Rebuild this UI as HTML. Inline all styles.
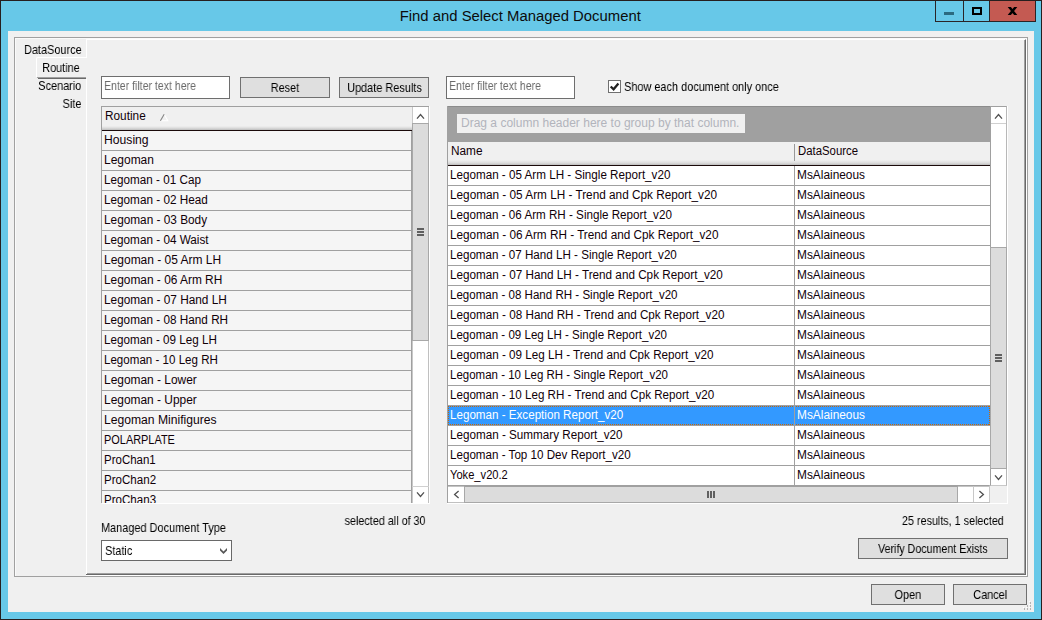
<!DOCTYPE html>
<html>
<head>
<meta charset="utf-8">
<title>Find and Select Managed Document</title>
<style>
html,body{margin:0;padding:0;}
body{width:1042px;height:620px;overflow:hidden;background:#67c8e8;position:relative;
  font-family:"Liberation Sans",sans-serif;font-size:12px;color:#000;}
.abs{position:absolute;box-sizing:border-box;}
#frame{left:0;top:0;width:1042px;height:620px;border:1px solid #261f1f;}
#title{left:0;top:0;width:1041px;height:31px;line-height:31.5px;text-align:center;font-size:15.2px;color:#0c0c0c;}
#title span{display:inline-block;transform:scaleX(.978);transform-origin:50% 50%;white-space:nowrap;}
#client{left:8px;top:31px;width:1026px;height:581px;background:#f0f0f0;}
/* MS Sans Serif look-alike: tall + condensed */
.ms{font-size:13px;line-height:14px;height:14px;white-space:nowrap;display:inline-block;transform:scaleX(.84);will-change:transform;}
.msl{transform-origin:0 50%;}
.msr{transform-origin:100% 50%;}
.msc{transform-origin:50% 50%;}
.lbl{height:14px;}
.btn{background:#dfdfdf;border:1px solid #707070;text-align:center;}
.btn .ms{position:relative;top:3px;}
.inp{background:#fff;border:1px solid #6e6e6e;}
.seg{font-size:12.5px;white-space:nowrap;display:inline-block;transform:scaleX(.945);transform-origin:0 50%;color:#100008;}
#lgrid{left:101px;top:106px;width:328px;height:397px;overflow:hidden;border-left:1px solid #a0a0a0;border-top:1px solid #a0a0a0;background:#f5f5f5;}
.lhdr{left:0;top:0;width:310px;height:24px;border-bottom:1px solid #1a0a0a;background:linear-gradient(#f0f0f0 0,#f0f0f0 19px,#dcdcdc 21px,#bdbdbd 23px);line-height:19px;padding-left:3px;}
.row{left:0;height:20px;border-bottom:1px solid #a0a0a0;line-height:19px;}
.lrow{width:310px;background:#f5f5f5;padding-left:2px;border-right:1px solid #a0a0a0;}
#rgrid{left:446px;top:106px;width:561px;height:397px;overflow:hidden;}
.rrow{left:1px;width:543px;background:#fff;border-left:1px solid #a0a0a0;}
.rrow .c1{position:absolute;left:2px;top:0;}
.rrow .c2{position:absolute;left:349px;top:0;}
.rrow.sel{background:#3399ff;}
.rrow.sel .seg{color:#fff;}
.vline{background:#a0a0a0;width:1px;}
.focus{left:0;top:0;width:542px;height:19px;background:
 repeating-linear-gradient(90deg,#cc6600 0,#cc6600 1px,transparent 1px,transparent 2px) 0 0/100% 1px no-repeat,
 repeating-linear-gradient(90deg,#cc6600 0,#cc6600 1px,transparent 1px,transparent 2px) 0 100%/100% 1px no-repeat,
 repeating-linear-gradient(180deg,#cc6600 0,#cc6600 1px,transparent 1px,transparent 2px) 0 0/1px 100% no-repeat,
 repeating-linear-gradient(180deg,#cc6600 0,#cc6600 1px,transparent 1px,transparent 2px) 100% 0/1px 100% no-repeat;}
</style>
</head>
<body>
<div class="abs" id="title"><span>Find and Select Managed Document</span></div>
<!-- caption buttons -->
<div class="abs" style="left:935px;top:1px;width:101px;height:21px;border:1px solid #2a2426;border-top:none;"></div>
<div class="abs" style="left:963px;top:1px;width:1px;height:20px;background:#2a2426;"></div>
<div class="abs" style="left:989px;top:1px;width:46px;height:20px;background:#c45a52;border-left:1px solid #2a2426;"></div>
<div class="abs" style="left:944px;top:12px;width:10px;height:3px;background:#2b6a80;"></div>
<div class="abs" style="left:972px;top:7px;width:10px;height:8px;border:2px solid #000;border-top-width:2px;"></div>
<svg class="abs" style="left:1007px;top:7px;overflow:hidden" width="11" height="8" viewBox="0 0 11 8"><path d="M1.5 -1 L9.5 9 M9.5 -1 L1.5 9" stroke="#000" stroke-width="2.5" fill="none"/></svg>
<div class="abs" id="client"></div>
<!-- outer bordered panel -->
<div class="abs" style="left:14px;top:37px;width:1014px;height:540px;border:1px solid #a0a0a0;"></div>
<div class="abs" style="left:15px;top:38px;width:1012px;height:538px;border:1px solid #fafafa;border-right:none;border-bottom:none;"></div>
<!-- tab page 3D border -->
<div class="abs" style="left:86px;top:39px;width:941px;height:537px;border-top:1px solid #fff;border-right:1px solid #fff;border-bottom:1px solid #fff;"></div>
<div class="abs" style="left:86px;top:39px;width:940px;height:536px;border-top:1px solid #fff;border-right:1px solid #696969;border-bottom:1px solid #696969;"></div>
<div class="abs" style="left:87px;top:40px;width:938px;height:534px;border-right:1px solid #a0a0a0;border-bottom:1px solid #a0a0a0;"></div>
<div class="abs" style="left:86px;top:39px;width:1px;height:18px;background:#fff;"></div>
<div class="abs" style="left:86px;top:79px;width:1px;height:495px;background:#fff;"></div>
<!-- selected tab -->
<div class="abs" style="left:36px;top:57px;width:51px;height:20px;border-top:1px solid #fff;border-left:1px solid #fff;border-top-left-radius:2px;"></div>
<div class="abs" style="left:37px;top:77px;width:49px;height:1px;background:#a0a0a0;"></div>
<div class="abs" style="left:38px;top:78px;width:48px;height:1px;background:#696969;"></div>
<div class="abs lbl" style="left:-118.5px;top:43px;width:200px;text-align:right;"><span class="ms msr">DataSource</span></div>
<div class="abs lbl" style="left:-120.5px;top:61px;width:200px;text-align:right;"><span class="ms msr">Routine</span></div>
<div class="abs lbl" style="left:-118.5px;top:79px;width:200px;text-align:right;"><span class="ms msr">Scenario</span></div>
<div class="abs lbl" style="left:-118.5px;top:97px;width:200px;text-align:right;"><span class="ms msr">Site</span></div>
<!-- filter row -->
<div class="abs inp" style="left:101px;top:76px;width:129px;height:23px;"><span class="ms msl" style="position:absolute;left:2px;top:2px;color:#6a6a6a;transform:scaleX(.81)">Enter filter text here</span></div>
<div class="abs btn" style="left:240px;top:77px;width:90px;height:21px;"><span class="ms msc">Reset</span></div>
<div class="abs btn" style="left:339px;top:77px;width:90px;height:21px;"><span class="ms msc">Update Results</span></div>
<div class="abs inp" style="left:446px;top:76px;width:129px;height:23px;"><span class="ms msl" style="position:absolute;left:2px;top:2px;color:#6a6a6a;transform:scaleX(.81)">Enter filter text here</span></div>
<div class="abs" style="left:608px;top:80px;width:13px;height:13px;border:1px solid #707070;background:#fff;"></div>
<svg class="abs" style="left:608px;top:80px" width="13" height="13" viewBox="0 0 13 13"><path d="M2.7 6.5 L5.6 9.3 L10.4 3.6" stroke="#222" stroke-width="2.3" fill="none"/></svg>
<div class="abs lbl" style="left:624px;top:80px;"><span class="ms msl">Show each document only once</span></div>
<div class="abs" id="lgrid">
<div class="abs lhdr"><span class="seg">Routine</span><svg class="abs" style="left:57px;top:6px" width="10" height="9"><path d="M5.3 1.5 L8.8 7.7 L1.5 7.7" fill="none" stroke="#fff" stroke-width="1.1"/><path d="M1.4 7.8 L5.2 1.2" stroke="#858585" stroke-width="1.1" fill="none"/></svg></div>
<div class="abs row lrow" style="top:24px"><span class="seg" style="transform:scaleX(0.973)">Housing</span></div>
<div class="abs row lrow" style="top:44px"><span class="seg" style="transform:scaleX(0.958)">Legoman</span></div>
<div class="abs row lrow" style="top:64px"><span class="seg" style="transform:scaleX(0.936)">Legoman - 01 Cap</span></div>
<div class="abs row lrow" style="top:84px"><span class="seg" style="transform:scaleX(0.939)">Legoman - 02 Head</span></div>
<div class="abs row lrow" style="top:104px"><span class="seg">Legoman - 03 Body</span></div>
<div class="abs row lrow" style="top:124px"><span class="seg" style="transform:scaleX(0.939)">Legoman - 04 Waist</span></div>
<div class="abs row lrow" style="top:144px"><span class="seg" style="transform:scaleX(0.958)">Legoman - 05 Arm LH</span></div>
<div class="abs row lrow" style="top:164px"><span class="seg" style="transform:scaleX(0.951)">Legoman - 06 Arm RH</span></div>
<div class="abs row lrow" style="top:184px"><span class="seg">Legoman - 07 Hand LH</span></div>
<div class="abs row lrow" style="top:204px"><span class="seg" style="transform:scaleX(0.940)">Legoman - 08 Hand RH</span></div>
<div class="abs row lrow" style="top:224px"><span class="seg" style="transform:scaleX(0.934)">Legoman - 09 Leg LH</span></div>
<div class="abs row lrow" style="top:244px"><span class="seg" style="transform:scaleX(0.926)">Legoman - 10 Leg RH</span></div>
<div class="abs row lrow" style="top:264px"><span class="seg" style="transform:scaleX(0.954)">Legoman - Lower</span></div>
<div class="abs row lrow" style="top:284px"><span class="seg" style="transform:scaleX(0.954)">Legoman - Upper</span></div>
<div class="abs row lrow" style="top:304px"><span class="seg" style="transform:scaleX(0.971)">Legoman Minifigures</span></div>
<div class="abs row lrow" style="top:324px"><span class="seg" style="transform:scaleX(0.875)">POLARPLATE</span></div>
<div class="abs row lrow" style="top:344px"><span class="seg" style="transform:scaleX(0.919)">ProChan1</span></div>
<div class="abs row lrow" style="top:364px"><span class="seg" style="transform:scaleX(0.925)">ProChan2</span></div>
<div class="abs row lrow" style="top:384px"><span class="seg" style="transform:scaleX(0.925)">ProChan3</span></div>
<!-- left grid vertical scrollbar -->
<div class="abs" style="left:310px;top:0;width:17px;height:396px;background:#fff;border-left:1px solid #c8c8c8;border-right:1px solid #c0c0c0;"></div>
<div class="abs" style="left:310px;top:16px;width:17px;height:218px;background:#dcdcdc;border:1px solid #a8a8a8;"></div>
<div class="abs" style="left:310px;top:379px;width:17px;height:1px;background:#d0d0d0;"></div>
<svg class="abs" style="left:313px;top:6px" width="11" height="7" viewBox="0 0 11 7"><path d="M2 5.6 L5.5 1.6 L9 5.6" stroke="#505050" stroke-width="1.3" fill="none"/></svg>
<svg class="abs" style="left:313px;top:384px" width="11" height="7" viewBox="0 0 11 7"><path d="M2 1.4 L5.5 5.4 L9 1.4" stroke="#505050" stroke-width="1.3" fill="none"/></svg>
<div class="abs" style="left:315px;top:121px;width:7px;height:2px;background:#606060;box-shadow:0 3px 0 #606060,0 6px 0 #606060;"></div>
</div>
<div class="abs" id="rgrid">
<div class="abs" style="left:1px;top:0;width:543px;height:36px;background:#a0a0a0;border-top:1px solid #8c8c8c;"></div>
<div class="abs" style="left:11px;top:8px;width:288px;height:19px;background:#f0f0f0;line-height:18px;padding-left:4px;"><span class="seg" style="color:#b2b4bc;transform:scaleX(.961)">Drag a column header here to group by that column.</span></div>
<div class="abs" style="left:1px;top:36px;width:543px;height:24px;border-bottom:1px solid #1a0a0a;background:linear-gradient(#f0f0f0 0,#f0f0f0 18px,#dcdcdc 21px,#bdbdbd 23px);line-height:19px;"><span class="seg" style="position:absolute;left:4px;top:0">Name</span><span class="seg" style="position:absolute;left:351px;top:0;transform:scaleX(.91)">DataSource</span></div>
<div class="abs" style="left:348px;top:38px;width:1px;height:17px;background:#989898;"></div>
<div class="abs row rrow" style="top:60px"><span class="seg c1" style="transform:scaleX(0.933)">Legoman - 05 Arm LH - Single Report_v20</span><span class="seg c2" style="transform:scaleX(.95)">MsAlaineous</span></div>
<div class="abs row rrow" style="top:80px"><span class="seg c1" style="transform:scaleX(0.942)">Legoman - 05 Arm LH - Trend and Cpk Report_v20</span><span class="seg c2" style="transform:scaleX(.95)">MsAlaineous</span></div>
<div class="abs row rrow" style="top:100px"><span class="seg c1" style="transform:scaleX(0.931)">Legoman - 06 Arm RH - Single Report_v20</span><span class="seg c2" style="transform:scaleX(.95)">MsAlaineous</span></div>
<div class="abs row rrow" style="top:120px"><span class="seg c1" style="transform:scaleX(0.940)">Legoman - 06 Arm RH - Trend and Cpk Report_v20</span><span class="seg c2" style="transform:scaleX(.95)">MsAlaineous</span></div>
<div class="abs row rrow" style="top:140px"><span class="seg c1" style="transform:scaleX(0.930)">Legoman - 07 Hand LH - Single Report_v20</span><span class="seg c2" style="transform:scaleX(.95)">MsAlaineous</span></div>
<div class="abs row rrow" style="top:160px"><span class="seg c1" style="transform:scaleX(0.937)">Legoman - 07 Hand LH - Trend and Cpk Report_v20</span><span class="seg c2" style="transform:scaleX(.95)">MsAlaineous</span></div>
<div class="abs row rrow" style="top:180px"><span class="seg c1" style="transform:scaleX(0.925)">Legoman - 08 Hand RH - Single Report_v20</span><span class="seg c2" style="transform:scaleX(.95)">MsAlaineous</span></div>
<div class="abs row rrow" style="top:200px"><span class="seg c1" style="transform:scaleX(0.936)">Legoman - 08 Hand RH - Trend and Cpk Report_v20</span><span class="seg c2" style="transform:scaleX(.95)">MsAlaineous</span></div>
<div class="abs row rrow" style="top:220px"><span class="seg c1" style="transform:scaleX(0.924)">Legoman - 09 Leg LH - Single Report_v20</span><span class="seg c2" style="transform:scaleX(.95)">MsAlaineous</span></div>
<div class="abs row rrow" style="top:240px"><span class="seg c1" style="transform:scaleX(0.934)">Legoman - 09 Leg LH - Trend and Cpk Report_v20</span><span class="seg c2" style="transform:scaleX(.95)">MsAlaineous</span></div>
<div class="abs row rrow" style="top:260px"><span class="seg c1" style="transform:scaleX(0.920)">Legoman - 10 Leg RH - Single Report_v20</span><span class="seg c2" style="transform:scaleX(.95)">MsAlaineous</span></div>
<div class="abs row rrow" style="top:280px"><span class="seg c1" style="transform:scaleX(0.930)">Legoman - 10 Leg RH - Trend and Cpk Report_v20</span><span class="seg c2" style="transform:scaleX(.95)">MsAlaineous</span></div>
<div class="abs row rrow sel" style="top:300px"><span class="seg c1" style="transform:scaleX(0.930)">Legoman - Exception Report_v20</span><span class="seg c2" style="transform:scaleX(.95)">MsAlaineous</span><div class="abs focus"></div></div>
<div class="abs row rrow" style="top:320px"><span class="seg c1" style="transform:scaleX(0.934)">Legoman - Summary Report_v20</span><span class="seg c2" style="transform:scaleX(.95)">MsAlaineous</span></div>
<div class="abs row rrow" style="top:340px"><span class="seg c1" style="transform:scaleX(0.930)">Legoman - Top 10 Dev Report_v20</span><span class="seg c2" style="transform:scaleX(.95)">MsAlaineous</span></div>
<div class="abs row rrow" style="top:360px"><span class="seg c1" style="transform:scaleX(0.891)">Yoke_v20.2</span><span class="seg c2" style="transform:scaleX(.95)">MsAlaineous</span></div>
<div class="abs vline" style="left:348px;top:60px;height:320px;"></div>
<!-- right grid vertical scrollbar -->
<div class="abs" style="left:544px;top:0;width:17px;height:380px;background:#fff;border-left:1px solid #a0a0a0;border-right:1px solid #b8b8b8;border-top:1px solid #a0a0a0;border-bottom:1px solid #c8c8c8;"></div>
<div class="abs" style="left:544px;top:141px;width:17px;height:222px;background:#dcdcdc;border:1px solid #a8a8a8;"></div>
<div class="abs" style="left:545px;top:17px;width:15px;height:1px;background:#d0d0d0;"></div>
<svg class="abs" style="left:547px;top:7px" width="11" height="7" viewBox="0 0 11 7"><path d="M2 5.6 L5.5 1.6 L9 5.6" stroke="#505050" stroke-width="1.3" fill="none"/></svg>
<svg class="abs" style="left:547px;top:368px" width="11" height="7" viewBox="0 0 11 7"><path d="M2 1.4 L5.5 5.4 L9 1.4" stroke="#505050" stroke-width="1.3" fill="none"/></svg>
<div class="abs" style="left:549px;top:248px;width:7px;height:2px;background:#606060;box-shadow:0 3px 0 #606060,0 6px 0 #606060;"></div>
<!-- horizontal scrollbar -->
<div class="abs" style="left:1px;top:379px;width:543px;height:18px;background:#fff;border-top:1px solid #a0a0a0;border-left:1px solid #a0a0a0;border-bottom:1px solid #c0c0c0;border-right:1px solid #c8c8c8;box-shadow:inset 0 1px 0 #c4c4c4;"></div>
<div class="abs" style="left:18px;top:380px;width:494px;height:17px;background:#dcdcdc;border:1px solid #a8a8a8;border-top-color:#a0a0a0;"></div>
<div class="abs" style="left:527px;top:380px;width:1px;height:16px;background:#c8c8c8;"></div>
<svg class="abs" style="left:7px;top:383px" width="7" height="11" viewBox="0 0 7 11"><path d="M5.6 2 L1.6 5.5 L5.6 9" stroke="#505050" stroke-width="1.3" fill="none"/></svg>
<svg class="abs" style="left:532px;top:383px" width="7" height="11" viewBox="0 0 7 11"><path d="M1.4 2 L5.4 5.5 L1.4 9" stroke="#505050" stroke-width="1.3" fill="none"/></svg>
<div class="abs" style="left:261px;top:385px;width:2px;height:7px;background:#606060;box-shadow:3px 0 0 #606060,6px 0 0 #606060;"></div>
<div class="abs" style="left:544px;top:380px;width:17px;height:17px;background:#f0f0f0;"></div>
<div class="abs" style="left:1px;top:0;width:1px;height:397px;background:#a0a0a0;"></div>
</div>
<div class="abs" style="left:1007px;top:106px;width:1px;height:398px;background:#fff;"></div>
<div class="abs" style="left:447px;top:503px;width:561px;height:1px;background:#fff;"></div>
<div class="abs" style="left:429px;top:106px;width:1px;height:398px;background:#fff;"></div>
<div class="abs" style="left:102px;top:503px;width:328px;height:1px;background:#fff;"></div>
<div class="abs lbl" style="left:226px;top:514px;width:200px;text-align:right;"><span class="ms msr" style="transform:scaleX(.83)">selected all of 30</span></div>
<div class="abs lbl" style="left:100.5px;top:521px;"><span class="ms msl">Managed Document Type</span></div>
<div class="abs inp" style="left:101px;top:540px;width:131px;height:21px;border-color:#696969;"><span class="ms msl" style="position:absolute;left:3px;top:3px;">Static</span>
<svg class="abs" style="left:117px;top:6px" width="9" height="8" viewBox="0 0 9 8"><polygon points="1,1 4.5,4.5 8,1 8,3.5 4.5,7 1,3.5" fill="#585858"/></svg></div>
<div class="abs lbl" style="left:804px;top:514px;width:200px;text-align:right;"><span class="ms msr" style="transform:scaleX(.83)">25 results, 1 selected</span></div>
<div class="abs btn" style="left:858px;top:538px;width:150px;height:21px;"><span class="ms msc" style="transform:scaleX(.82)">Verify Document Exists</span></div>
<!-- size grip -->
<div class="abs" style="left:1029px;top:601px;width:1px;height:1px;background:#fff;box-shadow:-3px 3px 0 #fff,0px 3px 0 #fff,-6px 6px 0 #fff,-3px 6px 0 #fff,0px 6px 0 #fff;"></div>
<div class="abs" style="left:1030px;top:602px;width:1px;height:2px;background:#b4b4b4;box-shadow:-3px 3px 0 #b4b4b4,0px 3px 0 #b4b4b4,-6px 6px 0 #b4b4b4,-3px 6px 0 #b4b4b4,0px 6px 0 #b4b4b4;"></div>
<div class="abs btn" style="left:871px;top:584px;width:74px;height:21px;"><span class="ms msc">Open</span></div>
<div class="abs btn" style="left:953px;top:584px;width:74px;height:21px;"><span class="ms msc">Cancel</span></div>
<div class="abs" id="frame"></div>
</body>
</html>
